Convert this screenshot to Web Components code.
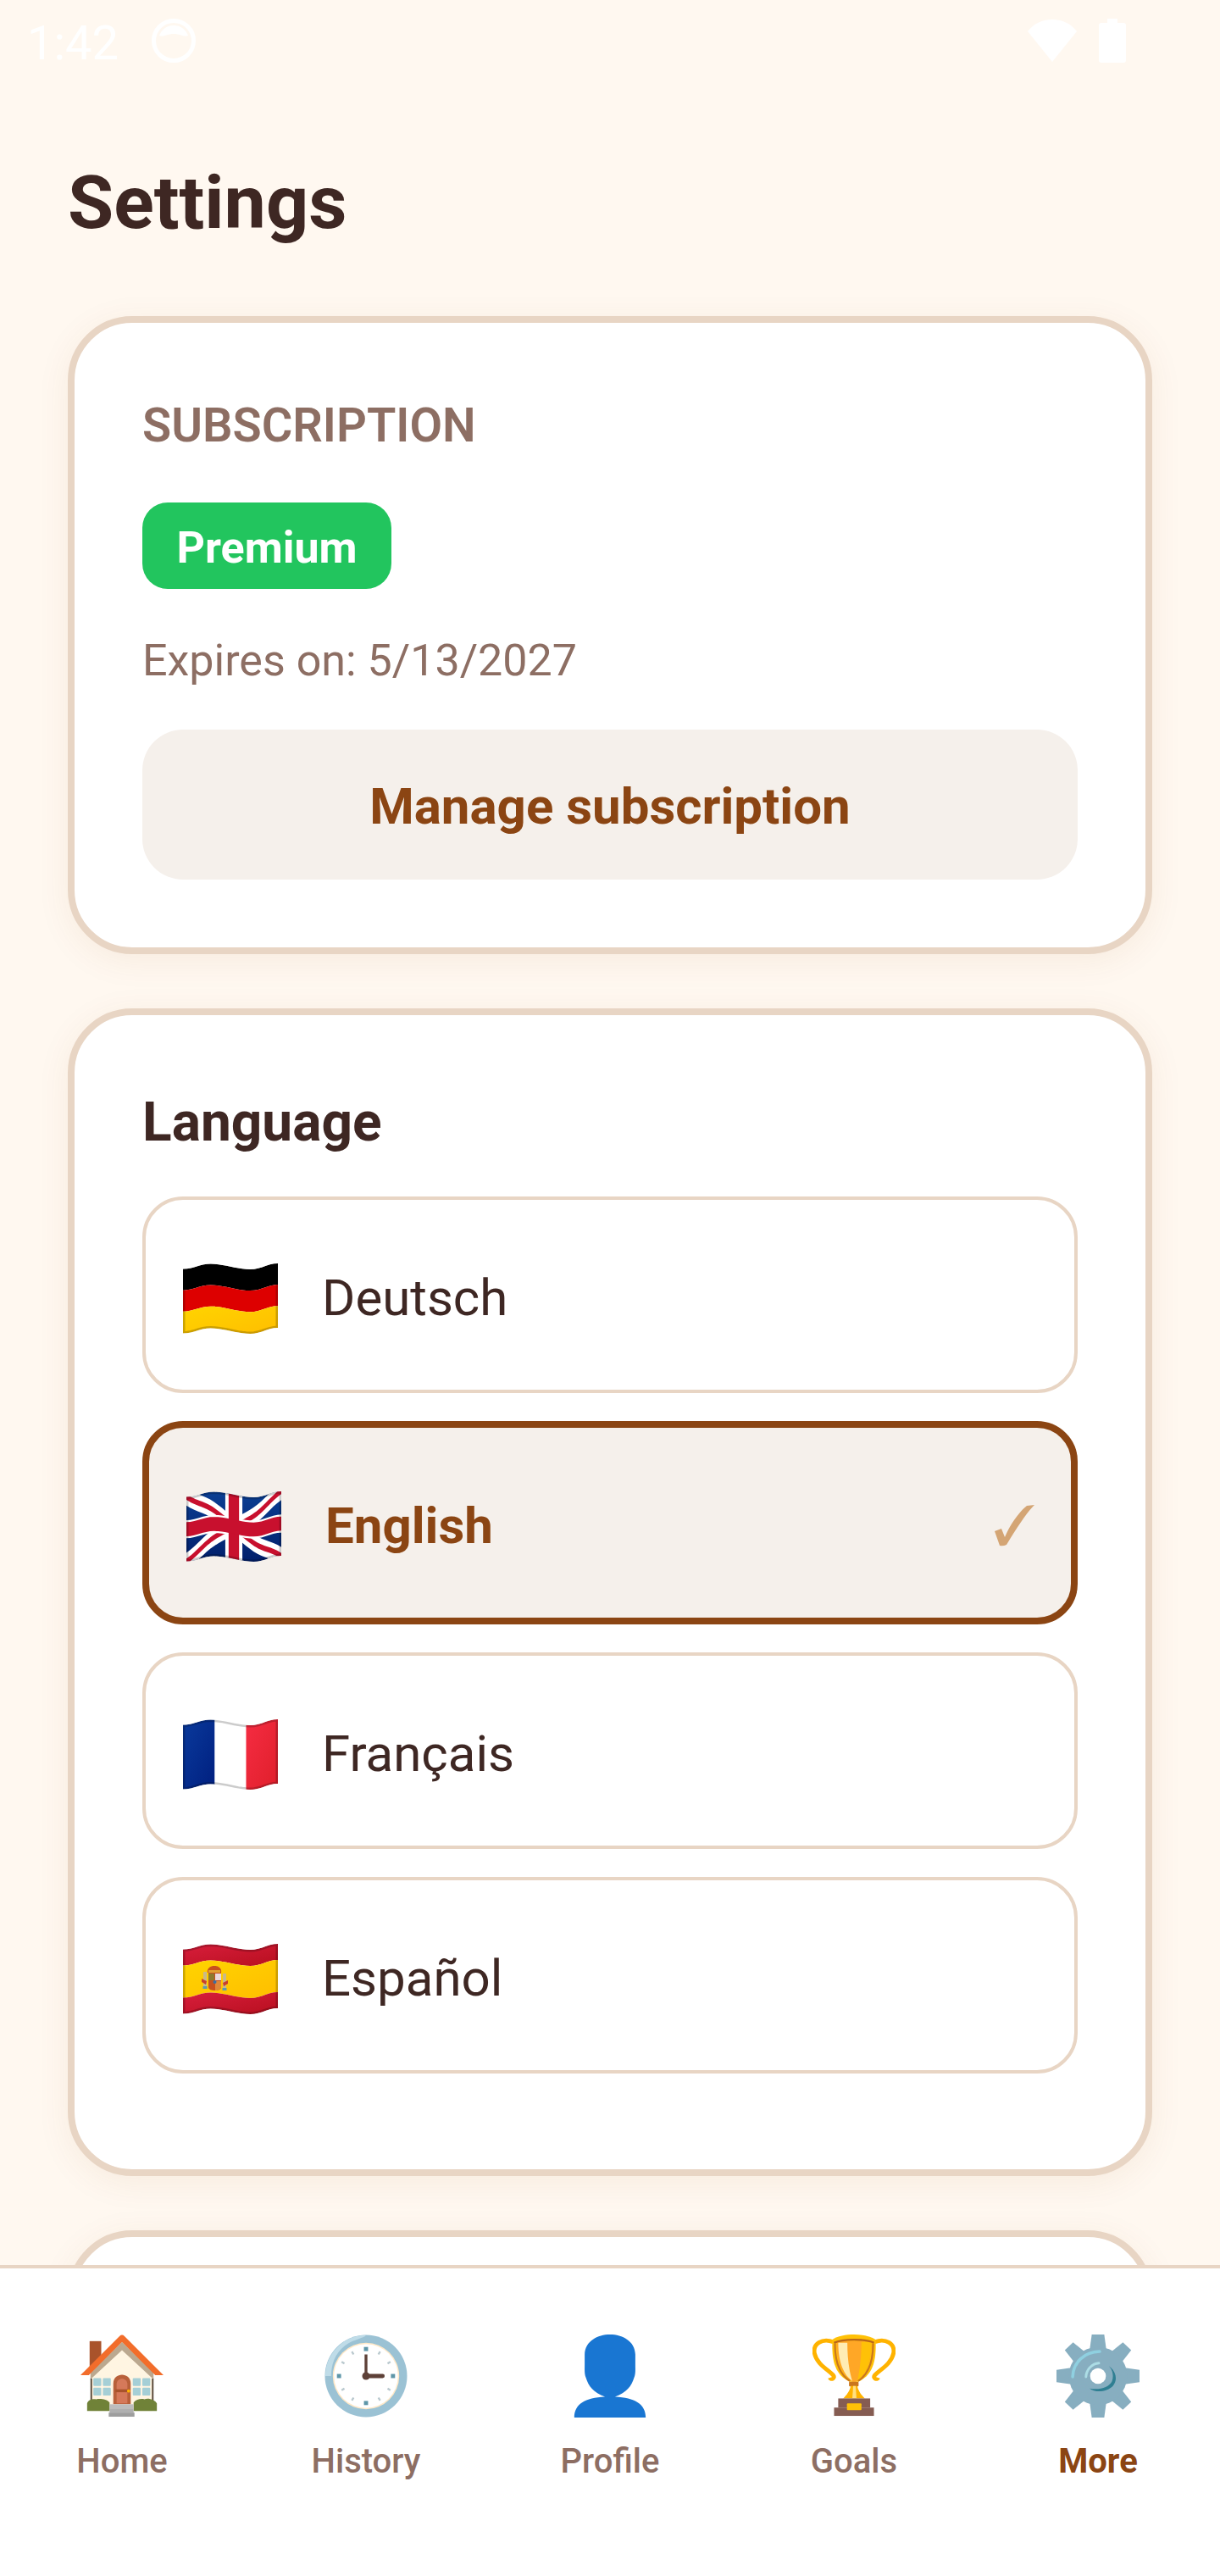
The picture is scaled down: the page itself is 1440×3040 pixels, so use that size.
<!DOCTYPE html>
<html lang="en">
<head>
<meta charset="utf-8">
<title>Settings</title>
<style>
  html, body { margin: 0; padding: 0; background: #FFF8F0; }
  body { font-family: Roboto, "Liberation Sans", sans-serif; color: #3E2723; }
</style>
</head>
<body>
<app-screen>
  <status-bar slot="status"></status-bar>
  <page-title>Settings</page-title>

  <settings-card>
    <card-eyebrow>SUBSCRIPTION</card-eyebrow>
    <plan-badge>Premium</plan-badge>
    <expiry-line>Expires on: 5/13/2027</expiry-line>
    <soft-button>Manage subscription</soft-button>
  </settings-card>

  <settings-card class="lang">
    <card-heading>Language</card-heading>
    <language-list>
      <language-row flag="de">Deutsch</language-row>
      <language-row flag="gb" selected>English</language-row>
      <language-row flag="fr">Français</language-row>
      <language-row flag="es">Español</language-row>
    </language-list>
  </settings-card>

  <settings-card></settings-card>

  <bottom-nav slot="nav">
    <nav-item icon="home">Home</nav-item>
    <nav-item icon="clock">History</nav-item>
    <nav-item icon="bust">Profile</nav-item>
    <nav-item icon="trophy">Goals</nav-item>
    <nav-item icon="gear" active>More</nav-item>
  </bottom-nav>
</app-screen>

<script>
const FONT = 'Roboto, "Liberation Sans", sans-serif';

function simple(name, css, html) {
  customElements.define(name, class extends HTMLElement {
    constructor() {
      super();
      this.attachShadow({ mode: 'open' }).innerHTML = `<style>${css}</style>${html || '<slot></slot>'}`;
    }
  });
}

simple('app-screen', `
  :host{ display:flex; flex-direction:column; width:1440px; height:3040px; overflow:hidden; background:#FFF8F0; font-family:${FONT}; }
  .scroll{ flex:1; min-height:0; overflow:hidden; display:flex; flex-direction:column; padding:0 80px; }
`, `<slot name="status"></slot><div class="scroll"><slot></slot></div><slot name="nav"></slot>`);

simple('status-bar', `
  :host{ display:flex; align-items:center; height:96px; padding:0 111px 0 32px; color:#fff; font-size:56px; box-sizing:border-box; flex:none; }
  .time{ line-height:102px; height:96px; }
  .dot{ margin-left:39px; width:52px; height:52px; }
  .right{ margin-left:auto; display:flex; align-items:center; gap:25px; }
`, `<span class="time">1:42</span>
  <svg class="dot" viewBox="0 0 52 52"><circle cx="26" cy="26" r="23.5" fill="none" stroke="#fff" stroke-width="5"/><path d="M9 20a18 18 0 0 1 34 0c-5 2-9-2-17-2s-12 4-17 2z" fill="#fff"/></svg>
  <div class="right">
    <svg width="60" height="52" viewBox="0 0 60 52"><path d="M30 51 1 15C8 6 18 1 30 1s22 5 29 14z" fill="#fff"/></svg>
    <svg width="32" height="52" viewBox="0 0 32 52"><path d="M10 0h12v5h7a3 3 0 0 1 3 3v41a3 3 0 0 1-3 3H3a3 3 0 0 1-3-3V8a3 3 0 0 1 3-3h7z" fill="#fff"/></svg>
  </div>`);

simple('page-title', `
  :host{ display:block; font-size:88px; font-weight:700; line-height:100px; margin:93px 0 84px; color:#3E2723; flex:none; }
`);

simple('settings-card', `
  :host{ display:block; flex:none; box-sizing:border-box; background:#fff; border:8px solid #E8D5C4; border-radius:76px; padding:80px; margin-bottom:64px; box-shadow:0 8px 40px rgba(139,69,19,.07); }
`);

simple('card-eyebrow', `
  :host{ display:block; font-size:56px; font-weight:600; line-height:66px; color:#8D6E63; margin-top:8px; margin-bottom:58px; }
`);

simple('plan-badge', `
  :host{ display:block; width:max-content; box-sizing:border-box; height:102px; line-height:107px; padding:0 40.5px; border-radius:30px; background:#22C55E; color:#fff; font-size:52px; font-weight:700; margin-bottom:53px; }
`);

simple('expiry-line', `
  :host{ display:block; font-size:52px; line-height:64px; color:#8D6E63; margin-bottom:49px; }
`);

simple('soft-button', `
  :host{ display:flex; align-items:center; justify-content:center; box-sizing:border-box; height:177px; padding-top:4px; border-radius:48px; background:#F5F0EB; color:#8B4513; font-size:60px; font-weight:700; }
`);

simple('card-heading', `
  :host{ display:block; font-size:64px; font-weight:700; line-height:76px; color:#3E2723; margin-top:9px; margin-bottom:49px; }
`);

simple('language-list', `
  :host{ display:flex; flex-direction:column; gap:33px; margin-bottom:33px; }
`);

// flag drawing: everything is given in unit space and bent along the same wave
const WAVE = [[0, 6.6], [32, .5], [80, 7], [112, 0]];
function waveAt(x) {
  for (let i = 0; i < WAVE.length - 1; i++) {
    const [x0, y0] = WAVE[i], [x1, y1] = WAVE[i + 1];
    if (x <= x1) {
      const t = (x - x0) / (x1 - x0);
      return y0 + (y1 - y0) * (1 - Math.cos(t * Math.PI)) / 2;
    }
  }
  return 0;
}
function warp(points) {
  const out = [];
  for (let i = 0; i < points.length; i++) {
    const a = points[i], b = points[(i + 1) % points.length];
    for (let s = 0; s < 24; s++) {
      const u = a[0] + (b[0] - a[0]) * s / 24, v = a[1] + (b[1] - a[1]) * s / 24;
      out.push((u * 112).toFixed(2) + ',' + (waveAt(u * 112) + v * 76).toFixed(2));
    }
  }
  return 'M' + out.join('L') + 'Z';
}
const poly = (fill, pts) => `<path fill="${fill}" d="${warp(pts)}"/>`;
const band = (fill, v0, v1) => poly(fill, [[0, v0], [1, v0], [1, v1], [0, v1]]);
const rect = (fill, u0, v0, u1, v1) => poly(fill, [[u0, v0], [u1, v0], [u1, v1], [u0, v1]]);
const slash = (fill, a, b, w) => {
  const dx = b[0] - a[0], dy = (b[1] - a[1]) * 76 / 112, l = Math.hypot(dx, dy);
  const nx = -dy / l * w, ny = dx / l * w * 112 / 76;
  return poly(fill, [[a[0] + nx, a[1] + ny], [b[0] + nx, b[1] + ny], [b[0] - nx, b[1] - ny], [a[0] - nx, a[1] - ny]]);
};

const FLAGS = {
  de: () => band('#000', 0, .33) + band('#DD0000', .33, .66) + band('url(#yel)', .66, 1),
  fr: () => rect('url(#blu)', 0, 0, .335, 1) + rect('#fff', .335, 0, .665, 1) + rect('url(#scar)', .665, 0, 1, 1),
  es: () => band('url(#red)', 0, .25) + band('url(#yel)', .25, .75) + band('url(#red)', .75, 1) + `
    <rect x="24" y="33" width="4" height="19" fill="#C9B98A"/><rect x="23.5" y="50" width="5" height="3" fill="#5E9AAE"/>
    <rect x="47" y="35" width="4" height="19" fill="#C9B98A"/><rect x="46.5" y="52" width="5" height="3" fill="#5E9AAE"/>
    <path d="M22 41l6 3-1 4-5-3zM53 43l-6 3 1 4 5-3z" fill="#C8402E"/>
    <path d="M29 34c-1-5 3-8 8-8s9 3 8 8z" fill="#C8501E"/>
    <path d="M30 31h14v3H30z" fill="#E0A030"/>
    <path d="M30 34h15v17c0 3-4 4-7.500 4S30 54 30 51z" fill="#C8501E"/>
    <rect x="30" y="35" width="7" height="8" fill="#8C7A2E"/><rect x="38" y="35" width="7" height="8" fill="#EBD9DC"/>
    <path d="M38 44h7v7c0 2-3 4-7 4z" fill="#E0873A"/>
    <circle cx="37.500" cy="45" r="2" fill="#3A6EA5"/>`,
  gb: () => band('url(#navy)', 0, 1)
    + slash('#fff', [0, 0], [1, 1], .075) + slash('#fff', [1, 0], [0, 1], .075)
    + slash('#C8102E', [0, 0], [.5, .5], .024) + slash('#C8102E', [1, 1], [.5, .5], .024)
    + slash('#C8102E', [1, 0], [.5, .5], .024) + slash('#C8102E', [0, 1], [.5, .5], .024)
    + rect('#fff', .41, 0, .59, 1) + rect('#fff', 0, .36, 1, .64)
    + rect('#C8102E', .445, 0, .555, 1) + rect('#C8102E', 0, .39, 1, .61)
};

customElements.define('flag-icon', class extends HTMLElement {
  static get observedAttributes() { return ['code'] }
  constructor() {
    super();
    this.attachShadow({ mode: 'open' });
  }
  attributeChangedCallback() {
    const code = this.getAttribute('code');
    const outline = warp([[0, 0], [1, 0], [1, 1], [0, 1]]);
    const id = 'clip-' + code;
    this.shadowRoot.innerHTML = `
      <style>:host{ display:block; width:112px; height:84px; margin-top:10px; flex:none; } svg{ display:block; }</style>
      <svg width="112" height="84" viewBox="0 0 112 84">
        <defs>
          <clipPath id="${id}"><path d="${outline}"/></clipPath>
          <linearGradient id="yel" x1="0" y1="0" x2="1" y2="1"><stop offset="0" stop-color="#FFD400"/><stop offset="1" stop-color="#FFBE00"/></linearGradient>
          <linearGradient id="red" x1="0" y1="0" x2="1" y2="1"><stop offset="0" stop-color="#D81E3C"/><stop offset="1" stop-color="#B80F1F"/></linearGradient>
          <linearGradient id="navy" x1="0" y1="0" x2="0" y2="1"><stop offset="0" stop-color="#0B3F94"/><stop offset="1" stop-color="#011F6B"/></linearGradient>
          <linearGradient id="blu" x1="0" y1="0" x2="1" y2="1"><stop offset="0" stop-color="#0A3A9C"/><stop offset="1" stop-color="#001F7F"/></linearGradient>
          <linearGradient id="scar" x1="0" y1="0" x2="1" y2="1"><stop offset="0" stop-color="#F52C42"/><stop offset="1" stop-color="#E01F2B"/></linearGradient>
        </defs>
        <g clip-path="url(#${id})">
          ${FLAGS[code]()}
          <path d="${outline}" fill="none" stroke="#000" stroke-opacity=".2" stroke-width="5"/>
        </g>
      </svg>`;
  }
});

customElements.define('language-row', class extends HTMLElement {
  constructor() {
    super();
    const flag = this.getAttribute('flag');
    const root = this.attachShadow({ mode: 'open' });
    root.innerHTML = `
      <style>
        :host{ display:flex; align-items:center; box-sizing:border-box; height:232px; padding:0 44px; gap:52px; background:#fff; border:4px solid #E8D5C4; border-radius:48px; font-size:60px; color:#3E2723; }
        :host([selected]){ height:240px; border:8px solid #8B4513; background:#F5F0EB; color:#8B4513; font-weight:700; }
        .txt{ padding-top:7px; }
        .check{ display:none; margin-left:auto; width:48px; height:50px; margin-right:-2px; margin-top:7px; }
        :host([selected]) .check{ display:block; }
      </style>
      <flag-icon code="${flag}"></flag-icon>
      <span class="txt"><slot></slot></span>
      <svg class="check" viewBox="0 0 48 50"><path d="M0 31 8 28 12 38C18 24 28 9 38 1L47 0C37 10 27 26 14 47Q10 49 6 48z" fill="#D4A574"/></svg>`;
  }
});

simple('bottom-nav', `
  :host{ display:grid; grid-template-columns:repeat(5,288px); flex:none; box-sizing:border-box; height:367px; background:#fff; border-top:4px solid #E8D5C4; padding-top:78px; }
`);

const ICONS = {
  home: `<svg viewBox="0 0 100 100" width="98" height="98">
    <rect x="11" y="8" width="14" height="32" fill="#A9532B"/>
    <path d="M13 46 50 9l37 37v46H13z" fill="#FFF5E2"/>
    <path d="M50 9 12 46v8L50 19l38 35v-8z" fill="#BBA88F"/>
    <path d="M0 49 47 2q3-3 6 0l47 47H90L50 9 10 49z" fill="#F26D2B"/>
    <path d="M12 53h2v30h-2zM86 53h2v30h-2z" fill="#5A4A3A"/>
    <g fill="#A5CFD6"><rect x="15.500" y="52.500" width="9.500" height="9.500" rx="1"/><rect x="27" y="52.500" width="9.500" height="9.500" rx="1"/><rect x="15.500" y="64" width="9.500" height="9.500" rx="1"/><rect x="27" y="64" width="9.500" height="9.500" rx="1"/><rect x="63" y="52.500" width="9.500" height="9.500" rx="1"/><rect x="74.500" y="52.500" width="9.500" height="9.500" rx="1"/><rect x="63" y="64" width="9.500" height="9.500" rx="1"/><rect x="74.500" y="64" width="9.500" height="9.500" rx="1"/></g>
    <path d="M39.500 84V59c0-14 21-14 21 0v25z" fill="#B8603A"/>
    <path d="M43.500 83V60c0-9 13-9 13 0v23z" fill="#D5795A"/>
    <rect x="42" y="66" width="17" height="3.500" fill="#A9532B"/>
    <circle cx="58" cy="68" r="2" fill="#FFB300"/>
    <path d="M8 92V83c1-4 6-6 11-5 5-1 13 0 16 4v10zM64 92V82c3-4 9-5 13-4 5-2 13 1 15 5v9z" fill="#708238"/>
    <rect x="35" y="84" width="29" height="5" fill="#BDBDBD"/><rect x="35" y="89" width="29" height="5" fill="#B0B0B0"/><rect x="34" y="94" width="31" height="5" fill="#9E9E9E"/></svg>`,
  clock: `<svg viewBox="0 0 100 100" width="98" height="98">
    <circle cx="50" cy="50" r="49.500" fill="#9BC2D4"/>
    <path d="M1 50C1 25 21 2 48 .8 54 1 42 5 34 8 18 15 8 30 8 50z" fill="#BFDCE8"/>
    <circle cx="50" cy="50" r="40" fill="#FFE9C8"/><circle cx="50" cy="50" r="38.500" fill="#fff"/>
    <g fill="#5E96A8"><rect x="47.500" y="15" width="5" height="5"/><rect x="47.500" y="80" width="5" height="5"/><rect x="15" y="47.500" width="5" height="5"/><rect x="80" y="47.500" width="5" height="5"/></g>
    <path d="M33 20.600l2 3.400M67 20.600l-2 3.400M20.600 33l3.400 2M79.400 33l-3.400 2M20.600 67l3.400-2M79.400 67l-3.400-2M33 79.400l2-3.400M67 79.400l-2-3.400" stroke="#B9C8CE" stroke-width="2.400"/>
    <path d="M50 50V24" stroke="#5D4037" stroke-width="3.400"/><path d="M50 50h20" stroke="#5D4037" stroke-width="5" stroke-linecap="round"/>
    <circle cx="50" cy="50" r="4.600" fill="#5D4037"/></svg>`,
  bust: `<svg viewBox="0 0 100 100" width="98" height="98">
    <path d="M7 100C7 84 20 76 44 75 30 70 24 62 21 52 19 48 19.500 42 19.500 36V24C20 8 35 0 50 0S80 8 80.500 24V36C80.500 42 81 48 79 52 76 62 70 70 56 75 80 76 93 84 93 100z" fill="#1976D2"/></svg>`,
  trophy: `<svg viewBox="0 0 100 100" width="98" height="98">
    <path d="M25 9C12 4 0 11 2.500 23 5 35 18 42 25 49c3 4-3 6-4 3" fill="none" stroke="#FFB300" stroke-width="5"/>
    <path d="M75 9c13-5 25 2 22.500 14C95 35 82 42 75 49c-3 4 3 6 4 3" fill="none" stroke="#FFB300" stroke-width="5"/>
    <path d="M24 6C30 2 40 0 50 0s20 2 26 6C77 30 74 48 55 57H45C26 48 23 30 24 6z" fill="#FFC107"/>
    <path d="M29 10c10-3 32-3 42 0 0 20-4 37-19 47h-4C33 47 29 30 29 10z" fill="#FFA726"/>
    <path d="M31 10h11c0 18 2 34 6 46C36 48 31 30 31 10z" fill="#FFECB3"/>
    <path d="M59 9h12c0 20-4 36-17 47 3-14 5-29 5-47z" fill="#FFC107"/>
    <path d="M26 10c10-5 38-5 48 0" fill="none" stroke="#B9651B" stroke-width="2.500"/>
    <path d="M27 11c0 20 4 36 18 45M73 11c0 20-4 36-18 45" fill="none" stroke="#C9761E" stroke-width="2.200"/>
    <rect x="44" y="57" width="11.500" height="5.500" rx="1" fill="#C9761E"/>
    <path d="M46 62h8c1 6 5 11 9 15H37c4-4 8-9 9-15z" fill="#FFB300"/>
    <path d="M49 62h3l1 15h-5z" fill="#FFE082"/>
    <rect x="31" y="77" width="38.500" height="11" fill="#855C52"/><rect x="26" y="88" width="48" height="10" fill="#855C52"/>
    <rect x="41.500" y="83" width="17.500" height="8" rx="1" fill="#FFC107"/></svg>`,
  gear: `<svg viewBox="0 0 100 100" width="98" height="98">
    <g fill="#87AEC0">
      <path d="M42.500 0h15l2.500 18H40z"/><path d="M42.500 100h15l2.500-18H40z"/>
      <path d="M0 42.500v15l18 2.500V40z"/><path d="M100 42.500v15l-18 2.500V40z"/>
      <path d="M10 19l10-9.500 16 13-13 13z"/><path d="M90 19 80 9.500l-16 13 13 13z"/>
      <path d="M10 81l10 9.500 16-13-13-13z"/><path d="M90 81 80 90.500l-16-13 13-13z"/>
      <circle cx="50" cy="50" r="35"/>
    </g>
    <path d="M19.500 51C20 33 34 21 52 20.500" fill="none" stroke="#8FD0E0" stroke-width="3.600" stroke-linecap="round"/>
    <path d="M35.500 51C36 42 43 35 51 34.500" fill="none" stroke="#ACDDE5" stroke-width="3" stroke-linecap="round"/>
    <path d="M63 38C68 43 69 50 67 56 63 64 52 67 40 65 46 70 60 70 68 62 74 55 72 44 63 38z" fill="#2F7F92"/>
    <circle cx="50" cy="50" r="9.500" fill="#fff"/></svg>`
};

customElements.define('nav-item', class extends HTMLElement {
  constructor() {
    super();
    const icon = this.getAttribute('icon');
    this.attachShadow({ mode: 'open' }).innerHTML = `
      <style>
        :host{ display:flex; flex-direction:column; align-items:center; font-size:40px; font-weight:500; color:#8D6E63; }
        :host([active]){ color:#8B4513; font-weight:700; }
        .ic{ height:98px; width:98px; }
        .ic svg{ display:block; }
        .lab{ line-height:48px; margin-top:28px; }
      </style>
      <div class="ic">${ICONS[icon]}</div>
      <div class="lab"><slot></slot></div>`;
  }
});
</script>
</body>
</html>
